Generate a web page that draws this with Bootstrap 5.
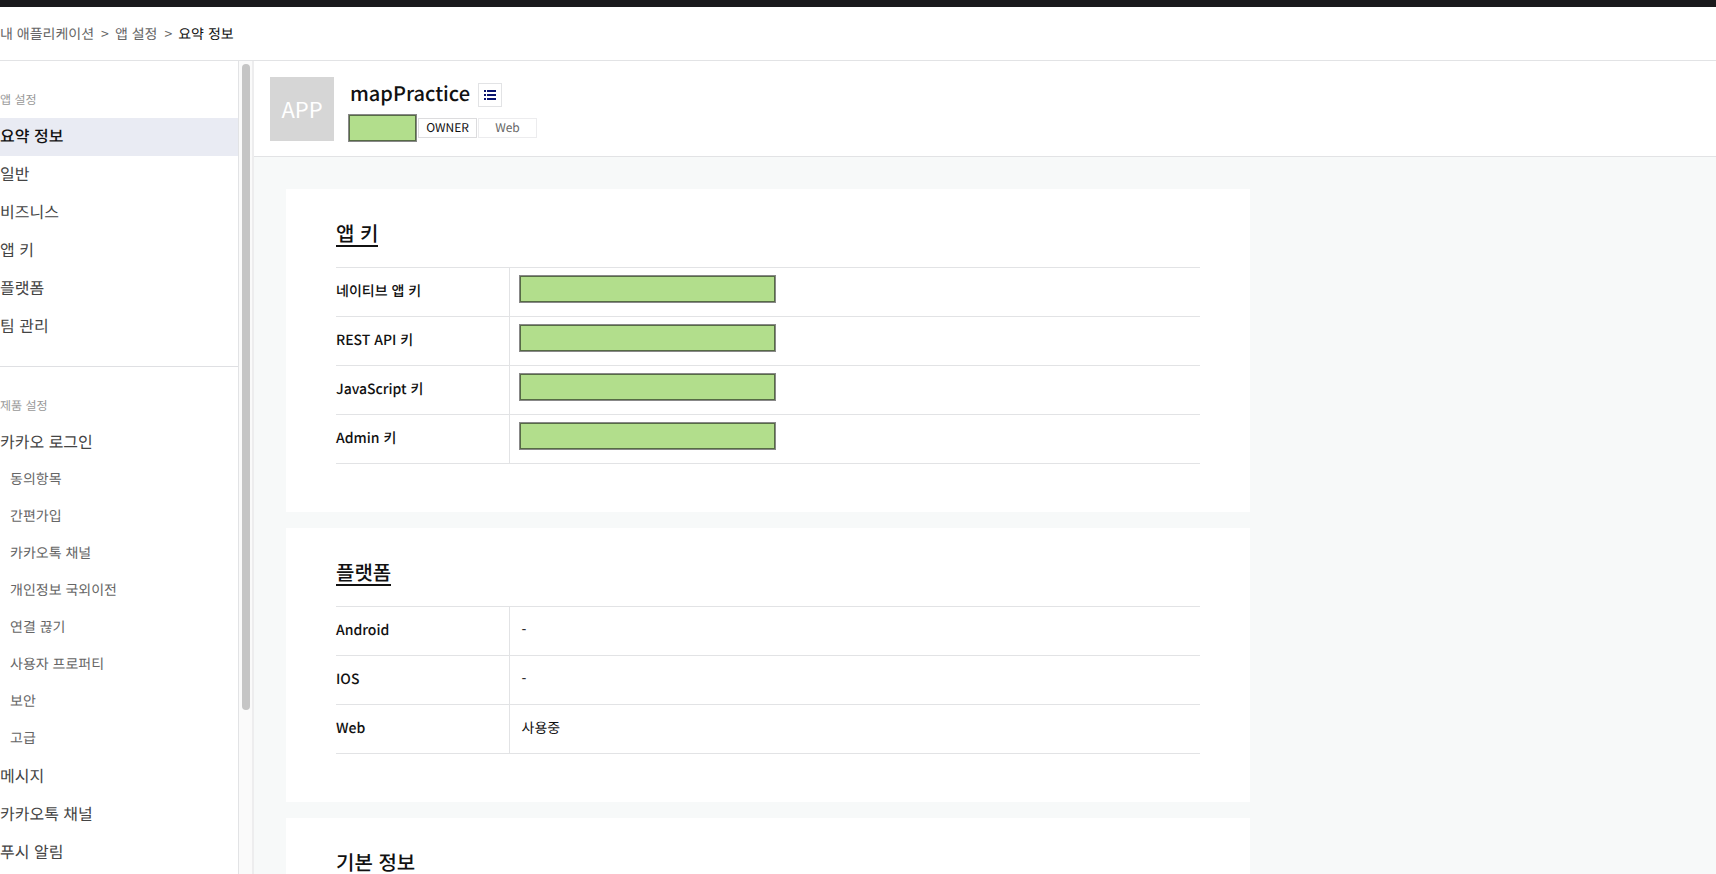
<!DOCTYPE html>
<html lang="ko">
<head>
<meta charset="utf-8">
<meta name="viewport" content="width=device-width, initial-scale=1">
<title>요약 정보 - mapPractice</title>
<link rel="stylesheet" href="https://cdn.jsdelivr.net/npm/bootstrap@5.3.0/dist/css/bootstrap.min.css">
<style>
  body { font-family: "Noto Sans CJK KR", sans-serif; font-size: 14px; line-height: 20px; color: #111; background: #f7f9f9; text-rendering: geometricPrecision; }
  a { color: inherit; text-decoration: none; }
  .top-strip { height: 7px; background: #1a1a1c; }
  .crumb-bar { height: 54px; border-bottom: 1px solid #e2e3e5; background: #fff; }
  .crumb-bar .breadcrumb { --bs-breadcrumb-divider: ">"; --bs-breadcrumb-divider-color: #666; --bs-breadcrumb-item-padding-x: 8px; --bs-breadcrumb-item-active-color: #111; color: #666; }
  .crumb-bar .breadcrumb-item + .breadcrumb-item { padding-left: 7px; }
  .crumb-bar .breadcrumb-item + .breadcrumb-item::before { padding-right: 6px; }

  .side-menu { width: 239px; border-right: 1px solid #e2e3e5; background: #fff; }
  .menu-group + .menu-group { border-top: 1px solid #dfe0e3; }
  .menu-label { padding: 29px 0 8px; font-size: 12px; color: #999; }
  .menu-label.h6 { margin: 0; font-weight: 400; line-height: 20px; }
  .side-menu .nav-link { padding: 5px 0 9px; font-size: 16px; line-height: 24px; color: #444; }
  .side-menu .nav-link.active { font-weight: 500; color: #111; background: #e9ebf3; }
  .side-menu .sub-menu .nav-link { padding: 7px 10px 9px; font-size: 14px; line-height: 21px; color: #666; }
  .scroll-track { width: 15px; padding: 3px 0 3px 3px; border-right: 2px solid #ededee; background: #fafafa; }
  .scroll-thumb { width: 8px; height: 80%; border-radius: 4px; background: #c5c5c5; }

  .app-head { padding: 16px 16px 14px; border-bottom: 1px solid #e2e3e5; background: #fff; }
  .app-icon { width: 64px; height: 64px; font-size: 22px; color: #fff; background: #d6d6d6; }
  .app-info { margin-left: 14px; }
  .app-name { padding-left: 2px; font-size: 20px; font-weight: 500; line-height: 32px; }
  .list-btn { width: 24px; height: 24px; margin-top: 6px; border: 1px solid #e2e3e5; border-radius: 0; background: #fff; }
  .meta-row { gap: 1px; padding-top: 5px; }
  .tag { width: 59px; height: 20px; border: 1px solid #dcdcde; font-size: 12px; line-height: 18px; text-align: center; }
  .tag-soft { border-color: #ececee; color: #666; }
  .masked { height: 28px; border: 1px solid #888; box-shadow: inset 0 0 0 1px #566b45; background: #b2de8c; }
  .masked-name { width: 69px; }
  .masked-key { width: 257px; }

  .content { padding: 32px; }
  .panel { max-width: 964px; padding: 32px 50px 48px; background: #fff; }
  .panel-title { margin: 0 0 20px; font-size: 20px; font-weight: 500; line-height: 24px; }
  .panel-title a { display: inline-block; border-bottom: 2px solid #111; }
  .info-table { margin: 0; border-top: 1px solid #e2e3e5; color: #111; }
  .info-table > tbody > tr > * { height: 49px; padding: 0 12px 3px; border-bottom: 1px solid #e2e3e5; vertical-align: middle; }
  .info-table > tbody > tr > th { width: 173px; padding-left: 0; border-right: 1px solid #e2e3e5; font-weight: 500; }
  .info-table > tbody > tr > .key-cell { padding: 0 9px 6px; }
</style>
</head>
<body class="vh-100 overflow-hidden d-flex flex-column">
  <div class="top-strip flex-shrink-0"></div>
  <nav class="crumb-bar flex-shrink-0 d-flex align-items-center" aria-label="breadcrumb">
    <ol class="breadcrumb mb-0">
      <li class="breadcrumb-item"><a href="#">내 애플리케이션</a></li>
      <li class="breadcrumb-item"><a href="#">앱 설정</a></li>
      <li class="breadcrumb-item active" aria-current="page">요약 정보</li>
    </ol>
  </nav>
  <div class="d-flex flex-grow-1 overflow-hidden">
    <aside class="side-menu flex-shrink-0 overflow-hidden">
      <div class="menu-group pb-3 mb-1">
        <h2 class="menu-label h6">앱 설정</h2>
        <nav class="nav flex-column">
          <a class="nav-link active" href="#">요약 정보</a>
          <a class="nav-link" href="#">일반</a>
          <a class="nav-link" href="#">비즈니스</a>
          <a class="nav-link" href="#">앱 키</a>
          <a class="nav-link" href="#">플랫폼</a>
          <a class="nav-link" href="#">팀 관리</a>
        </nav>
      </div>
      <div class="menu-group">
        <h2 class="menu-label h6">제품 설정</h2>
        <nav class="nav flex-column">
          <a class="nav-link" href="#">카카오 로그인</a>
          <div class="sub-menu">
            <a class="nav-link" href="#">동의항목</a>
            <a class="nav-link" href="#">간편가입</a>
            <a class="nav-link" href="#">카카오톡 채널</a>
            <a class="nav-link" href="#">개인정보 국외이전</a>
            <a class="nav-link" href="#">연결 끊기</a>
            <a class="nav-link" href="#">사용자 프로퍼티</a>
            <a class="nav-link" href="#">보안</a>
            <a class="nav-link" href="#">고급</a>
          </div>
          <a class="nav-link" href="#">메시지</a>
          <a class="nav-link" href="#">카카오톡 채널</a>
          <a class="nav-link" href="#">푸시 알림</a>
        </nav>
      </div>
    </aside>
    <div class="scroll-track flex-shrink-0"><div class="scroll-thumb"></div></div>
    <main class="flex-grow-1 overflow-hidden">
      <header class="app-head d-flex">
        <div class="app-icon d-flex align-items-center justify-content-center">APP</div>
        <div class="app-info">
          <div class="d-flex align-items-start">
            <h1 class="app-name mb-0 me-2">mapPractice</h1>
            <button type="button" class="list-btn btn p-0 d-flex align-items-center justify-content-center" aria-label="앱 목록">
              <svg width="12" height="10" viewBox="0 0 12 10" fill="#0a1470" aria-hidden="true"><path d="M0 0h2v2H0zM3 0h9v2H3zM0 4h2v2H0zM3 4h9v2H3zM0 8h2v2H0zM3 8h9v2H3z"/></svg>
            </button>
          </div>
          <div class="meta-row d-flex align-items-center">
            <span class="masked masked-name"></span>
            <span class="tag">OWNER</span>
            <span class="tag tag-soft">Web</span>
          </div>
        </div>
      </header>
      <div class="content d-flex flex-column gap-3">
        <section class="panel">
          <h2 class="panel-title"><a href="#">앱 키</a></h2>
          <table class="info-table table table-borderless">
            <tbody>
              <tr><th scope="row">네이티브 앱 키</th><td class="key-cell"><div class="masked masked-key"></div></td></tr>
              <tr><th scope="row">REST API 키</th><td class="key-cell"><div class="masked masked-key"></div></td></tr>
              <tr><th scope="row">JavaScript 키</th><td class="key-cell"><div class="masked masked-key"></div></td></tr>
              <tr><th scope="row">Admin 키</th><td class="key-cell"><div class="masked masked-key"></div></td></tr>
            </tbody>
          </table>
        </section>
        <section class="panel">
          <h2 class="panel-title"><a href="#">플랫폼</a></h2>
          <table class="info-table table table-borderless">
            <tbody>
              <tr><th scope="row">Android</th><td>-</td></tr>
              <tr><th scope="row">IOS</th><td>-</td></tr>
              <tr><th scope="row">Web</th><td>사용중</td></tr>
            </tbody>
          </table>
        </section>
        <section class="panel">
          <h2 class="panel-title"><a href="#">기본 정보</a></h2>
        </section>
      </div>
    </main>
  </div>
<script src="https://cdn.jsdelivr.net/npm/bootstrap@5.3.0/dist/js/bootstrap.bundle.min.js"></script>
</body>
</html>
